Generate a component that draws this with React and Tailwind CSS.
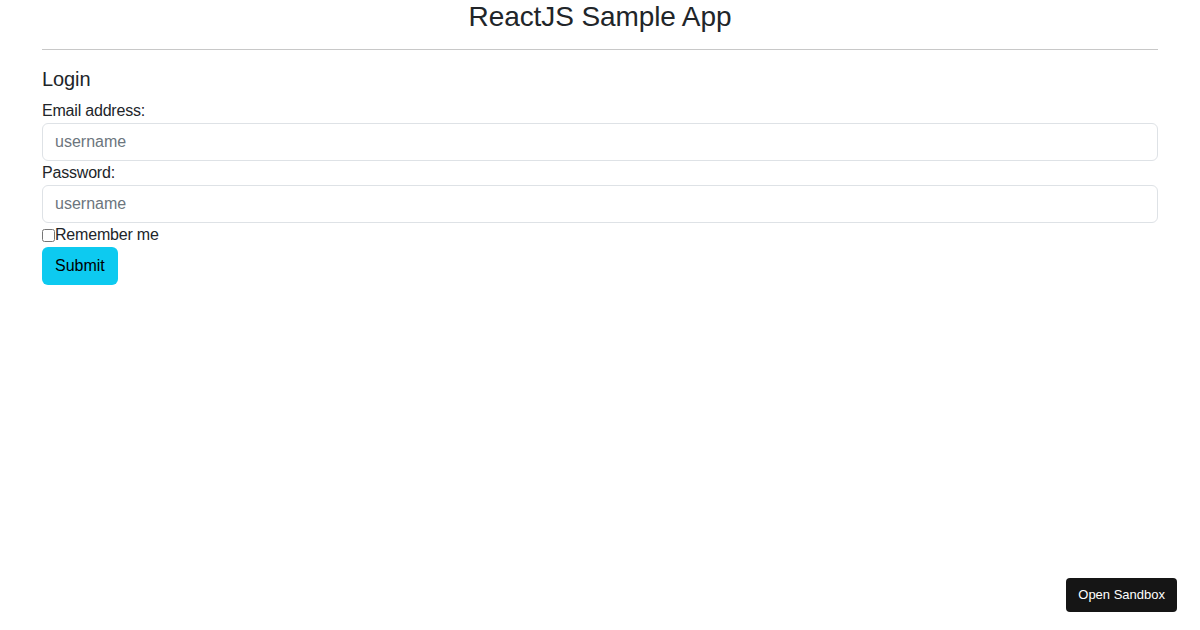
export default function App() {
  return (
    <div className="min-h-screen bg-white text-[#212529]" style={{ fontFamily: '"Liberation Sans", Arial, sans-serif' }}>
      <div className="mx-[42px]">
        <h3 className="text-center text-[28px] leading-[34px] font-normal tracking-[-0.1px]">ReactJS Sample App</h3>
        <hr className="mt-[15px] mb-[17px] border-t border-[#c8c8c8]" />
        <h5 className="text-[20px] leading-6 font-normal mb-2 tracking-[-0.1px]">Login</h5>
        <form className="text-base leading-6 tracking-[-0.2px]" onSubmit={(e) => e.preventDefault()}>
          <label className="block">Email address:</label>
          <input
            type="text"
            placeholder="username"
            className="block w-full h-[38px] px-3 border border-[#dee2e6] rounded-md outline-none tracking-normal placeholder:text-[#6c757d]"
          />
          <label className="block">Password:</label>
          <input
            type="password"
            placeholder="username"
            className="block w-full h-[38px] px-3 border border-[#dee2e6] rounded-md outline-none tracking-normal placeholder:text-[#6c757d]"
          />
          <div className="flex items-center h-6">
            <input type="checkbox" className="w-[13px] h-[13px] m-0" />
            <span>Remember me</span>
          </div>
          <button type="submit" className="h-[38px] px-[13px] bg-[#0dcaf0] rounded-md text-black tracking-normal">
            Submit
          </button>
        </form>
      </div>
      <button className="fixed right-[23px] bottom-[18px] h-[34px] px-3 bg-[#151515] text-white text-[13px] rounded" style={{ fontFamily: '"Liberation Sans", Arial, sans-serif' }}>
        Open Sandbox
      </button>
    </div>
  );
}
